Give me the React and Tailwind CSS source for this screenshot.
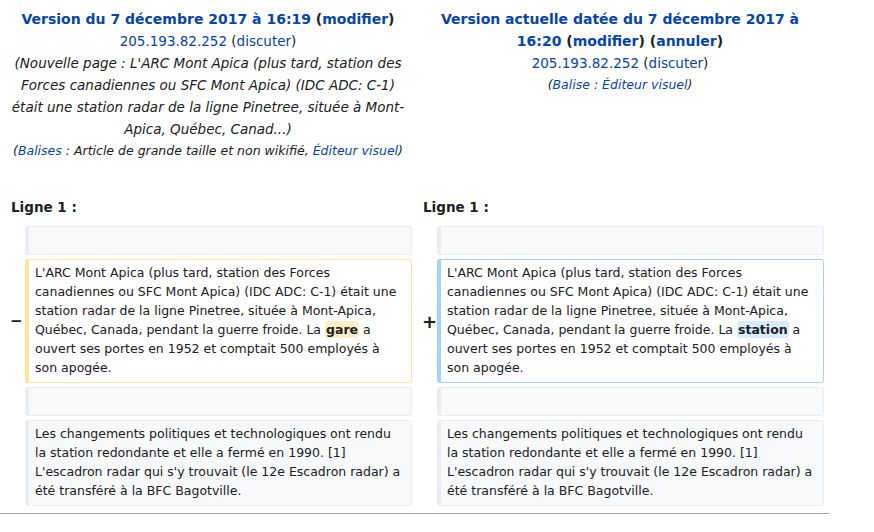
import React from "react";

const link = "text-[#0645ad]";

const HeaderCell = ({ children }) => (
  <div className="px-[4px] text-center text-[13.5px] leading-[22px] text-[#202122]">
    {children}
  </div>
);

const Marker = ({ sign, size }) => (
  <div className={`flex items-center pl-[6px] font-bold text-[#202122] ${size}`}>
    {sign}
  </div>
);

const Box = ({ kind = "ctx", children }) => {
  const styles = {
    ctx: "bg-[#f8f9fa] border-[#eaecf0]",
    del: "bg-white border-[#ffe49c]",
    ins: "bg-white border-[#a3d3ff]",
  };
  return (
    <div
      className={`border border-l-4 rounded-[3px] pl-[6px] pr-[6px] pt-[3px] pb-[5px] text-[12.5px] leading-[19px] text-[#202122] ${styles[kind]}`}
    >
      {children || <br />}
    </div>
  );
};

const paragraph1 = (word, hl) => (
  <>
    L'ARC Mont Apica (plus tard, station des Forces canadiennes ou SFC Mont Apica) (IDC ADC: C-1) était une
    station radar de la ligne Pinetree, située à Mont-Apica, Québec, Canada, pendant la guerre froide. La{" "}
    <span className={`font-bold rounded-[3px] px-[1px] py-[1px] ${hl}`}>{word}</span> a ouvert ses portes en
    1952 et comptait 500 employés à son apogée.
  </>
);

const paragraph2 =
  "Les changements politiques et technologiques ont rendu la station redondante et elle a fermé en 1990. [1] L'escadron radar qui s'y trouvait (le 12e Escadron radar) a été transféré à la BFC Bagotville.";

export default function App() {
  return (
    <div className="w-[874px] h-[532px] bg-white font-['DejaVu_Sans',sans-serif] overflow-hidden">
      <div className="w-[829px] px-[4px] pt-[8px]">
        <div className="grid grid-cols-[408px_408px] gap-x-[4px]">
          <HeaderCell>
            <div className="text-[14px] font-bold">
              <span className={link}>Version du 7 décembre 2017 à 16:19</span> (
              <span className={link}>modifier</span>)
            </div>
            <div>
              <span className={link}>205.193.82.252</span> (<span className={link}>discuter</span>)
            </div>
            <div className="italic">
              (Nouvelle page : L'ARC Mont Apica (plus tard, station des Forces canadiennes ou SFC Mont Apica)
              (IDC ADC: C-1) était une station radar de la ligne Pinetree, située à Mont-Apica, Québec,
              Canad...)
            </div>
            <div className="italic text-[12.5px]">
              (<span className={link}>Balises</span> : Article de grande taille et non wikifié,{" "}
              <span className={link}>Éditeur visuel</span>)
            </div>
          </HeaderCell>
          <HeaderCell>
            <div className="text-[14px] font-bold">
              <span className={link}>Version actuelle datée du 7 décembre 2017 à 16:20</span> (
              <span className={link}>modifier</span>) (<span className={link}>annuler</span>)
            </div>
            <div>
              <span className={link}>205.193.82.252</span> (<span className={link}>discuter</span>)
            </div>
            <div className="italic text-[12.5px]">
              (<span className={link}>Balise</span> : <span className={link}>Éditeur visuel</span>)
            </div>
          </HeaderCell>
        </div>

        <div className="grid grid-cols-[408px_408px] gap-x-[4px] mt-[34px]">
          <div className="pl-[7px] text-[13.5px] leading-[22px] font-bold text-[#202122]">Ligne 1 :</div>
          <div className="pl-[7px] text-[13.5px] leading-[22px] font-bold text-[#202122]">Ligne 1 :</div>
        </div>

        <div className="grid grid-cols-[17px_387px_17px_387px] gap-[4px] mt-[8px]">
          <div />
          <Box />
          <div />
          <Box />

          <Marker sign="−" size="text-[15px]" />
          <Box kind="del">{paragraph1("gare", "bg-[#feeec8]")}</Box>
          <Marker sign="+" size="text-[18px]" />
          <Box kind="ins">{paragraph1("station", "bg-[#d8ecff]")}</Box>

          <div />
          <Box />
          <div />
          <Box />

          <div />
          <Box>{paragraph2}</Box>
          <div />
          <Box>{paragraph2}</Box>
        </div>
      </div>
      <div className="w-[829px] mt-[7px] border-t border-[#a2a9b1]" />
    </div>
  );
}
